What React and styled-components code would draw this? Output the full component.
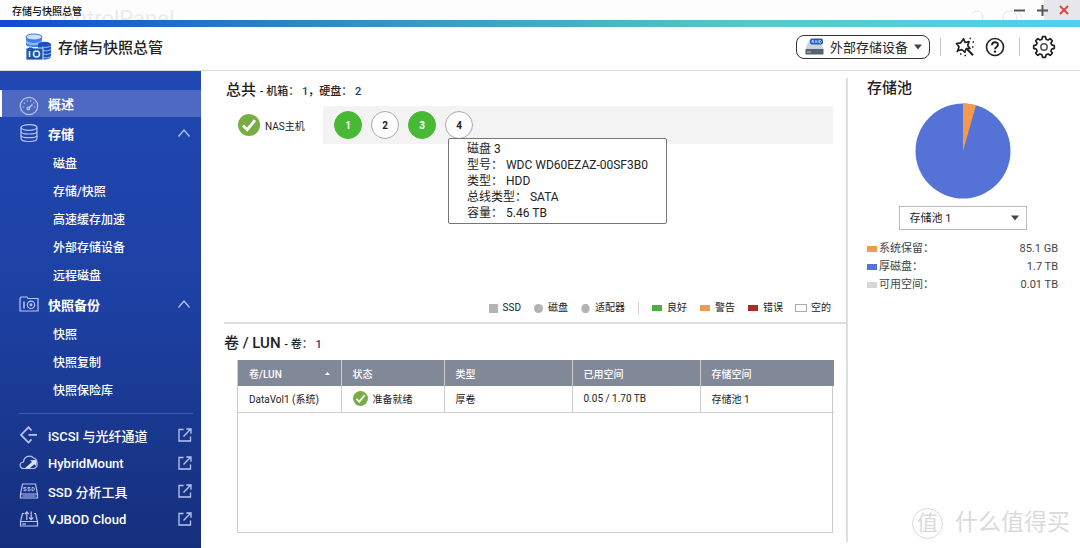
import { useState } from "react";
import styled, { createGlobalStyle } from "styled-components";

const STORAGE_LINKS = ["磁盘", "存储/快照", "高速缓存加速", "外部存储设备", "远程磁盘"];
const BACKUP_LINKS = ["快照", "快照复制", "快照保险库"];
const BAYS = [
    { id: 1, used: true },
    { id: 2, used: false },
    { id: 3, used: true },
    { id: 4, used: false },
];
const POOL_USAGE = [
    { label: "系统保留：", value: "85.1 GB", color: "#f39b4b" },
    { label: "厚磁盘：", value: "1.7 TB", color: "#5573d7" },
    { label: "可用空间：", value: "0.01 TB", color: "#d6d6d6" },
];

const gearPoints = () => {
    const points = [];
    for (let i = 0; i < 8; i++) {
        [
            [-15, 8],
            [-8, 10.4],
            [8, 10.4],
            [15, 8],
        ].forEach(([offset, r]) => {
            const a = ((i * 45 + offset) * Math.PI) / 180;
            points.push(
                `${(12 + r * Math.sin(a)).toFixed(2)},${(12 - r * Math.cos(a)).toFixed(2)}`
            );
        });
    }
    return points.join(" ");
};

const LogoIcon = () => (
    <svg width="27" height="28" viewBox="0 0 27 28" aria-hidden="true">
        <path d="M1 4v8c2 3 14 3 16 0V4z" fill="#3d7ff0" />
        <path d="M1 7c3 4 13 4 16 0v3c-3 3-13 3-16 0z" fill="#8db8f8" />
        <ellipse cx="9" cy="4" rx="8" ry="3" fill="#cfe0fb" stroke="#3a78e8" />
        <path d="M13 11c2-3 11-3 13 0v13c-2 3-9 3-13 2z" fill="#1c4fc4" />
        <path
            d="M17 14c3 1 7 0 9-1M18 17.500c3 1 6 0 8-1M18 21c3 1 6 0 8-1M18 24.500c3 1 6 0 8-1"
            stroke="#9fc0f6"
            fill="none"
        />
        <path d="M1 15h2l1-1h3l1 1h10v12H1z" fill="#1d57a8" stroke="#fff" strokeWidth="0.800" />
        <path d="M4.500 18v6" stroke="#fff" strokeWidth="1.500" />
        <circle cx="11.500" cy="21" r="3" fill="none" stroke="#d9e8ff" strokeWidth="1.600" />
    </svg>
);

const GaugeIcon = () => (
    <svg width="20" height="20" viewBox="0 0 20 20" aria-hidden="true">
        <circle cx="10" cy="10" r="8.700" />
        <path d="M9.500 12.500l4-4" strokeWidth="1.600" />
        <circle cx="9.300" cy="12.500" r="1.300" />
        <path d="M3.800 11h1.400M4.800 6.800l1.200.8M8 4.300l.5 1.300M12 4.300l-.5 1.300M15.200 6.500l-1 .8M15 11h1.400" />
    </svg>
);

const DatabaseIcon = () => (
    <svg width="20" height="20" viewBox="0 0 20 20" aria-hidden="true">
        <ellipse cx="10" cy="4.500" rx="8" ry="2.800" />
        <path d="M2 4.500v11c0 4 16 4 16 0v-11M2 8.200c0 3.700 16 3.700 16 0M2 11.900c0 3.700 16 3.700 16 0" />
    </svg>
);

const SnapshotIcon = () => (
    <svg width="20" height="20" viewBox="0 0 20 20" aria-hidden="true">
        <path d="M1 4.500V17h18V4.500H9L8 3H2z" />
        <path d="M5 7.500v7" strokeWidth="1.500" />
        <circle cx="12" cy="10.800" r="3.700" />
        <circle cx="12" cy="10.800" r="0.900" />
    </svg>
);

const IscsiIcon = () => (
    <svg width="20" height="20" viewBox="0 0 20 20" aria-hidden="true">
        <path
            d="M12.500 5.500L9.500 2.300 2 9.900l7.500 7.600 3-3.200M9.500 9.900H18"
            strokeWidth="1.700"
        />
    </svg>
);

const HybridIcon = () => (
    <svg width="20" height="20" viewBox="0 0 20 20" aria-hidden="true">
        <path d="M5 15.500c-5 0-5-6-.5-6.500C5 3 12 1.500 14.500 5c4 .5 5.500 9 .5 10.500z" />
        <path
            className="solid"
            d="M5.500 15.500l7.500-6.500-1.800-1.700 6.300-.3-.5 6-1.700-1.800-5 4.300z"
        />
    </svg>
);

const SsdIcon = () => (
    <svg width="20" height="20" viewBox="0 0 20 20" aria-hidden="true">
        <path d="M3.500 3h13l2 10v4h-17v-4zM1.500 13h17M3.500 15h13" />
        <path
            d="M7.300 6.500H4.800V8h2.300v1.700H4.500M11.300 6.500H8.900V8h2.200v1.700H8.600M13 6.500v3.200h1.200c1.600 0 1.600-3.200 0-3.200z"
            strokeWidth="0.900"
        />
    </svg>
);

const VjbodIcon = () => (
    <svg width="20" height="20" viewBox="0 0 20 20" aria-hidden="true">
        <path d="M5 4.500H3.500l-2 8V17h17v-4.500l-2-8H15M1.500 12.500h17M4 14v2M6 14v2" />
        <path d="M7.800 11V3M5.800 5l2-2.200 2 2.200M12.200 2.500v8M10.200 8.500l2 2.200 2-2.200" />
    </svg>
);

const ExternalIcon = () => (
    <svg width="14" height="14" viewBox="0 0 14 14" aria-hidden="true">
        <path
            d="M5.500 1.500H1v11.500h11.500V8.500M5.500 8.500l7-7.200M8.300 1h4.700v4.700"
            strokeWidth="1.300"
        />
    </svg>
);

const ChevronIcon = () => (
    <svg width="14" height="14" viewBox="0 0 14 14" aria-hidden="true">
        <path d="M1.500 10.500L7 4l5.500 6.500" />
    </svg>
);

const CheckIcon = ({ size }) => (
    <svg width={size} height={size} viewBox="0 0 22 22" aria-hidden="true">
        <circle cx="11" cy="11" r="11" fill="#78ad45" />
        <path d="M5 11.500l4.300 4.200 7.700-9.500" fill="none" stroke="#fff" strokeWidth="2.800" />
    </svg>
);

const CaretIcon = () => (
    <svg width="8" height="6" viewBox="0 0 8 6" aria-hidden="true">
        <path d="M0 0.500h8L4 5.500z" fill="#444" />
    </svg>
);

const RaidIcon = () => (
    <svg width="19" height="17" viewBox="0 0 19 17" aria-hidden="true">
        <path d="M4 2h11l3.500 9h-18z" fill="#cdd3da" />
        <path d="M0.500 11h18v5.500h-18z" fill="#59636e" />
        <path d="M2 14h4" stroke="#b9d26a" />
        <rect x="5" y="0.500" width="13" height="6" rx="2" fill="#1c5cb8" />
        <path
            d="M7 5V2.300h1.500v1.500H7.500L9 5M10 5l1-2.700L12 5M13.200 2.200V5M14.500 2.300V5c2.500 0 2.500-2.700 0-2.700z"
            fill="none"
            stroke="#d4e6ff"
            strokeWidth="0.700"
        />
    </svg>
);

const WandIcon = () => (
    <svg width="20" height="20" viewBox="0 0 20 20" fill="none" stroke="#222" aria-hidden="true">
        <path
            d="M8.600 1.800l1.500 3.700 4-.9-1.400 3.800 2.300 3-3.800.3-1.400 3.500-3-2.500-4 .9 1.200-3.800L1.500 6.500l4-.6z"
            strokeWidth="1.700"
            strokeLinejoin="round"
        />
        <path d="M11.800 11.800l6.200 6.400" strokeWidth="2" />
        <path
            d="M14.500 1.500h1.500M17.500 5h1.500M17 10h1.500M5 17h1.500M9.500 18.500h1.500M1.500 14.500H3"
            strokeWidth="1.300"
        />
    </svg>
);

const HelpIcon = () => (
    <svg width="20" height="20" viewBox="0 0 20 20" fill="none" stroke="#222" aria-hidden="true">
        <circle cx="10" cy="10" r="8.500" strokeWidth="1.600" />
        <path d="M7 8.200c0-4 6-3.800 6-.4 0 2-3 2.200-3 4.400" strokeWidth="1.900" />
        <circle cx="10" cy="14.600" r="1.200" fill="#222" stroke="none" />
    </svg>
);

const GearIcon = () => (
    <svg width="24" height="24" viewBox="0 0 24 24" fill="none" stroke="#222" aria-hidden="true">
        <polygon points={gearPoints()} strokeWidth="1.700" strokeLinejoin="round" />
        <circle cx="12" cy="12" r="3.200" strokeWidth="1.500" stroke="#555" />
    </svg>
);

const PoolChart = () => (
    <svg width="96" height="96" viewBox="0 0 96 96" role="img" aria-label="存储池">
        <circle cx="48" cy="48" r="47.500" fill="#5573d7" />
        <path d="M48 48V0.500A47.500 47.500 0 0 1 61 2.300z" fill="#f39b4b" />
    </svg>
);

const App = () => {
    const [pool, setPool] = useState("存储池 1");

    return (
        <Page>
            <GlobalStyle />
            <TitleBar>
                <Backdrop aria-hidden="true">
                    <span>ControlPanel</span>
                    <svg width="60" height="20" viewBox="0 0 60 20" fill="none" stroke="#e6e6e6">
                        <circle cx="5" cy="17" r="6" />
                        <circle cx="38" cy="18" r="7" />
                        <path d="M46 12a8 8 0 0 1 4 6" />
                    </svg>
                </Backdrop>
                <WindowName>存储与快照总管</WindowName>
                <WindowButton aria-label="最小化">
                    <svg width="11" height="11" viewBox="0 0 11 11">
                        <path d="M0 5.500h11" stroke="#555" strokeWidth="2" />
                    </svg>
                </WindowButton>
                <WindowButton aria-label="最大化">
                    <svg width="11" height="11" viewBox="0 0 11 11">
                        <path d="M0 5.500h11M5.500 0v11" stroke="#555" strokeWidth="2" />
                    </svg>
                </WindowButton>
                <WindowButton $close aria-label="关闭">
                    <svg width="10" height="10" viewBox="0 0 10 10">
                        <path d="M1 1l8 8M9 1L1 9" stroke="#e0453c" strokeWidth="2" />
                    </svg>
                </WindowButton>
            </TitleBar>
            <ColorBar />
            <Header>
                <LogoIcon />
                <h1>存储与快照总管</h1>
                <DeviceButton>
                    <RaidIcon />
                    外部存储设备
                    <CaretIcon />
                </DeviceButton>
                <Tools>
                    <IconButton aria-label="向导">
                        <WandIcon />
                    </IconButton>
                    <IconButton aria-label="帮助">
                        <HelpIcon />
                    </IconButton>
                </Tools>
                <Tools>
                    <IconButton aria-label="设置">
                        <GearIcon />
                    </IconButton>
                </Tools>
            </Header>
            <Body>
                <Sidebar>
                    <NavLink href="#overview" className="active">
                        <GaugeIcon />
                        概述
                    </NavLink>
                    <GroupButton aria-expanded="true">
                        <DatabaseIcon />
                        <span>存储</span>
                        <ChevronIcon />
                    </GroupButton>
                    <SubList>
                        {STORAGE_LINKS.map((name) => (
                            <li key={name}>
                                <a href="#storage">{name}</a>
                            </li>
                        ))}
                    </SubList>
                    <GroupButton aria-expanded="true">
                        <SnapshotIcon />
                        <span>快照备份</span>
                        <ChevronIcon />
                    </GroupButton>
                    <SubList>
                        {BACKUP_LINKS.map((name) => (
                            <li key={name}>
                                <a href="#snapshot">{name}</a>
                            </li>
                        ))}
                    </SubList>
                    <NavDivider />
                    <NavLink href="#iscsi">
                        <IscsiIcon />
                        <span>iSCSI 与光纤通道</span>
                        <ExternalIcon />
                    </NavLink>
                    <NavLink href="#hybridmount">
                        <HybridIcon />
                        <span>HybridMount</span>
                        <ExternalIcon />
                    </NavLink>
                    <NavLink href="#ssd">
                        <SsdIcon />
                        <span>SSD 分析工具</span>
                        <ExternalIcon />
                    </NavLink>
                    <NavLink href="#vjbod">
                        <VjbodIcon />
                        <span>VJBOD Cloud</span>
                        <ExternalIcon />
                    </NavLink>
                </Sidebar>
                <Content>
                    <Overview>
                        <Heading>
                            总共{" "}
                            <small>
                                - 机箱： <b>1</b>，硬盘： <b>2</b>
                            </small>
                        </Heading>
                        <Enclosure>
                            <Host>
                                <CheckIcon size={22} />
                                NAS主机
                            </Host>
                            <BayStrip>
                                {BAYS.map((bay) => (
                                    <Bay key={bay.id} $used={bay.used}>
                                        {bay.id}
                                    </Bay>
                                ))}
                                <Tooltip role="tooltip">
                                    <p>磁盘 3</p>
                                    <p>型号： WDC WD60EZAZ-00SF3B0</p>
                                    <p>类型： HDD</p>
                                    <p>总线类型： SATA</p>
                                    <p>容量： 5.46 TB</p>
                                </Tooltip>
                            </BayStrip>
                        </Enclosure>
                        <Legend>
                            <li>
                                <Shape />
                                SSD
                            </li>
                            <li>
                                <Shape $round />
                                磁盘
                            </li>
                            <li>
                                <svg width="9" height="9" viewBox="0 0 10 10" aria-hidden="true">
                                    <path d="M3 0h4l2.500 3v4L7 10H3L0.500 7V3z" fill="#b3b3b3" />
                                </svg>
                                适配器
                            </li>
                            <LegendDivider />
                            <li>
                                <Swatch $color="#4caf3f" />
                                良好
                            </li>
                            <li>
                                <Swatch $color="#ee9b50" />
                                警告
                            </li>
                            <li>
                                <Swatch $color="#b02a24" />
                                错误
                            </li>
                            <li>
                                <Swatch $color="#fff" $outlined />
                                空的
                            </li>
                        </Legend>
                    </Overview>
                    <Volumes>
                        <Heading>
                            卷 / LUN{" "}
                            <small>
                                - 卷： <b>1</b>
                            </small>
                        </Heading>
                        <TableBox>
                            <VolumeTable>
                                <colgroup>
                                    <col width="103" />
                                    <col width="103" />
                                    <col width="128" />
                                    <col width="128" />
                                    <col width="134" />
                                </colgroup>
                                <thead>
                                    <tr>
                                        <th>
                                            <SortLabel>
                                                卷/LUN
                                                <svg
                                                    width="5"
                                                    height="3"
                                                    viewBox="0 0 5 3"
                                                    aria-hidden="true"
                                                >
                                                    <path d="M2.500 0L5 3H0z" fill="#fff" />
                                                </svg>
                                            </SortLabel>
                                        </th>
                                        <th>状态</th>
                                        <th>类型</th>
                                        <th>已用空间</th>
                                        <th>存储空间</th>
                                    </tr>
                                </thead>
                                <tbody>
                                    <tr>
                                        <td>DataVol1 (系统)</td>
                                        <td>
                                            <Status>
                                                <CheckIcon size={15} />
                                                准备就绪
                                            </Status>
                                        </td>
                                        <td>厚卷</td>
                                        <td>0.05 / 1.70 TB</td>
                                        <td>存储池 1</td>
                                    </tr>
                                </tbody>
                            </VolumeTable>
                        </TableBox>
                    </Volumes>
                </Content>
                <PoolPanel>
                    <h2>存储池</h2>
                    <PoolChart />
                    <SelectBox>
                        <select
                            aria-label="存储池"
                            value={pool}
                            onChange={(e) => setPool(e.target.value)}
                        >
                            <option>存储池 1</option>
                        </select>
                        <CaretIcon />
                    </SelectBox>
                    <UsageList>
                        {POOL_USAGE.map((item) => (
                            <UsageRow key={item.label}>
                                <Swatch $color={item.color} />
                                <dt>{item.label}</dt>
                                <dd>{item.value}</dd>
                            </UsageRow>
                        ))}
                    </UsageList>
                </PoolPanel>
            </Body>
            <Watermark>
                <span>值</span>
                什么值得买
            </Watermark>
        </Page>
    );
};

const GlobalStyle = createGlobalStyle`
    * {
        box-sizing: border-box;
    }
    body {
        margin: 0;
        background: white;
        color: #222;
        font-family: Roboto, "Noto Sans CJK SC", sans-serif;
        font-size: 12px;
    }
    h1, h2, p, ul, dl, dd {
        margin: 0;
        padding: 0;
    }
    ul {
        list-style: none;
    }
    a {
        color: inherit;
        text-decoration: none;
    }
    button, select {
        font: inherit;
        color: inherit;
        border: none;
        background: none;
        padding: 0;
        cursor: pointer;
    }
    svg {
        display: block;
        flex: none;
    }
`;

const Page = styled.div`
    position: relative;
    min-height: 100vh;
    display: flex;
    flex-direction: column;
`;

const TitleBar = styled.div`
    position: relative;
    height: 20px;
    display: flex;
    align-items: center;
    padding-left: 12px;
    background: #fdfdfd;
`;

const Backdrop = styled.div`
    position: absolute;
    inset: 0;
    overflow: hidden;
    display: flex;
    justify-content: space-between;
    padding: 0 48px;
    color: #ebebeb;
    font-size: 22px;
    line-height: 38px;
`;

const WindowName = styled.span`
    position: relative;
    flex: 1;
    font-size: 10px;
    font-weight: 500;
    color: #111;
`;

const WindowButton = styled.button`
    position: relative;
    z-index: ${(props) => (props.$close ? 0 : 1)};
    height: 20px;
    width: ${(props) => (props.$close ? "36px" : "23px")};
    padding-left: ${(props) => (props.$close ? "15px" : "16px")};
    background: ${(props) => (props.$close ? "#e7e6ea" : "none")};
`;

const ColorBar = styled.div`
    height: 7px;
    background: linear-gradient(90deg, #1446d8, #2f88bd 28%, #58c8cc 70%, #4fd2ee);
`;

const Header = styled.header`
    height: 44px;
    display: flex;
    align-items: center;
    padding: 0 24px 4px 25px;
    border-bottom: 1px solid #d9d9d9;
    h1 {
        flex: 1;
        margin-left: 6px;
        font-size: 15px;
        font-weight: 500;
    }
`;

const DeviceButton = styled.button`
    height: 24px;
    display: flex;
    align-items: center;
    gap: 6px;
    margin-right: 10px;
    padding: 0 7px 0 8px;
    border: 1px solid #333;
    border-radius: 8px;
    font-size: 13px;
`;

const Tools = styled.div`
    height: 18px;
    display: flex;
    align-items: center;
    gap: 10px;
    padding: 0 14px;
    border-left: 1px solid #c4c4c4;
    &:last-child {
        padding: 0 0 0 12px;
    }
`;

const IconButton = styled.button`
    display: flex;
`;

const Body = styled.div`
    flex: 1;
    display: flex;
`;

const Sidebar = styled.nav`
    width: 201px;
    flex: none;
    padding-top: 19px;
    color: white;
    background: linear-gradient(#2047b3, #1d40a2 50%, #162f7c);
    svg {
        fill: none;
        stroke: #b7c6f3;
        stroke-width: 1.2;
    }
    .solid {
        fill: #dbe3fb;
        stroke: none;
    }
`;

const NavLink = styled.a`
    height: 28px;
    display: flex;
    align-items: center;
    padding: 0 9px 0 19px;
    font-size: 13px;
    font-weight: 500;
    svg:first-child {
        margin-right: 9px;
    }
    span {
        flex: 1;
    }
    &.active {
        height: 27px;
        margin-bottom: 2px;
        padding-left: 17px;
        border-left: 2px solid white;
        background: #4d69c1;
        font-weight: 700;
    }
    &.active svg {
        margin-top: 4px;
    }
`;

const GroupButton = styled.button`
    width: 100%;
    height: 28px;
    display: flex;
    align-items: center;
    padding: 0 10px 0 19px;
    font-size: 13px;
    font-weight: 700;
    text-align: left;
    svg:first-child {
        margin-right: 9px;
    }
    span {
        flex: 1;
    }
`;

const SubList = styled.ul`
    padding: 3px 0 0 53px;
    font-weight: 500;
    line-height: 28px;
`;

const NavDivider = styled.hr`
    margin: 8px 8px 7px 19px;
    border: none;
    border-top: 1px solid #3f5cae;
`;

const Content = styled.main`
    flex: 1;
    min-width: 0;
    display: flex;
    flex-direction: column;
    padding-left: 23px;
`;

const Heading = styled.h2`
    font-size: 15px;
    font-weight: 500;
    line-height: 20px;
    small {
        font-size: 11px;
    }
    b {
        font-weight: 500;
        color: #1d3a70;
    }
`;

const Overview = styled.section`
    height: 253px;
    display: flex;
    flex-direction: column;
    padding: 9px 13px 6px 2px;
    border-bottom: 2px solid #dedede;
`;

const Enclosure = styled.div`
    display: flex;
    margin-top: 4px;
    padding-left: 12px;
`;

const Host = styled.div`
    width: 85px;
    display: flex;
    align-items: center;
    gap: 5px;
    font-size: 10px;
`;

const BayStrip = styled.div`
    position: relative;
    flex: 1;
    height: 38px;
    display: flex;
    align-items: center;
    gap: 9px;
    padding-left: 11px;
    background: #f3f3f3;
`;

const Bay = styled.button`
    width: 28px;
    height: 28px;
    border-radius: 50%;
    border: 1px solid ${(props) => (props.$used ? "#48b935" : "#aaa")};
    background: ${(props) => (props.$used ? "#48b935" : "white")};
    color: ${(props) => (props.$used ? "white" : "#222")};
    font-size: 10px;
    font-weight: 700;
`;

const Tooltip = styled.div`
    position: absolute;
    top: 32px;
    left: 125px;
    width: 219px;
    padding: 2px 18px;
    border: 1px solid #777;
    border-radius: 2px;
    background: white;
    line-height: 16px;
    white-space: nowrap;
`;

const Legend = styled.ul`
    display: flex;
    justify-content: flex-end;
    align-items: center;
    gap: 13px;
    margin-top: auto;
    padding-right: 2px;
    font-size: 10px;
    line-height: 16px;
    li {
        display: flex;
        align-items: center;
        gap: 5px;
    }
`;

const Shape = styled.i`
    width: 9px;
    height: 9px;
    background: #b3b3b3;
    border-radius: ${(props) => (props.$round ? "50%" : "0")};
`;

const LegendDivider = styled.li`
    width: 1px;
    height: 12px;
    background: #ccc;
`;

const Swatch = styled.i`
    width: 10px;
    height: 6px;
    background: ${(props) => props.$color};
    outline: ${(props) => (props.$outlined ? "1px solid #aaa" : "none")};
`;

const Volumes = styled.section`
    flex: 1;
    display: flex;
    flex-direction: column;
    padding: 9px 13px 15px 0;
`;

const TableBox = styled.div`
    flex: 1;
    margin: 5px 0 0 13px;
    border: 1px solid #ccc;
    border-top: none;
`;

const VolumeTable = styled.table`
    width: 100%;
    table-layout: fixed;
    border-collapse: collapse;
    font-size: 10px;
    th,
    td {
        height: 26px;
        padding: 0 11px;
        text-align: left;
    }
    th {
        background: #818898;
        color: white;
        font-weight: 500;
    }
    th + th,
    td + td {
        border-left: 1px solid #ccc;
    }
    td {
        border-bottom: 1px solid #ccc;
    }
`;

const SortLabel = styled.div`
    display: flex;
    align-items: center;
    justify-content: space-between;
`;

const Status = styled.div`
    display: flex;
    align-items: center;
    gap: 5px;
`;

const PoolPanel = styled.aside`
    width: 234px;
    flex: none;
    display: flex;
    flex-direction: column;
    align-items: center;
    margin: 7px 0 6px;
    padding: 0 22px 0 19px;
    border-left: 2px solid #dedede;
    h2 {
        align-self: stretch;
        margin-bottom: 5px;
        font-size: 15px;
        font-weight: 500;
        line-height: 20px;
    }
`;

const SelectBox = styled.div`
    position: relative;
    margin-top: 7px;
    select {
        appearance: none;
        width: 128px;
        height: 24px;
        padding: 0 20px 0 10px;
        border: 1px solid #bbb;
        font-size: 11px;
    }
    svg {
        position: absolute;
        top: 9px;
        right: 8px;
        pointer-events: none;
    }
`;

const UsageList = styled.dl`
    align-self: stretch;
    margin-top: 10px;
    font-size: 11px;
    line-height: 18px;
    color: #444;
`;

const UsageRow = styled.div`
    display: flex;
    align-items: center;
    gap: 2px;
    dt {
        flex: 1;
    }
`;

const Watermark = styled.div`
    position: absolute;
    right: 10px;
    bottom: 9px;
    display: flex;
    align-items: center;
    gap: 12px;
    color: #dadada;
    font-size: 23px;
    line-height: 32px;
    pointer-events: none;
    span {
        width: 31px;
        height: 31px;
        border: 1px solid #dadada;
        border-radius: 50%;
        font-size: 21px;
        line-height: 28px;
        text-align: center;
    }
`;

export default App;
